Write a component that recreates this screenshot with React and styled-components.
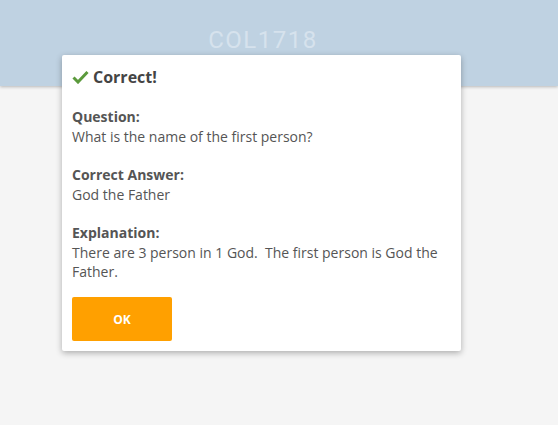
import React from 'react'
import styled, { createGlobalStyle } from 'styled-components'

const GlobalStyle = createGlobalStyle`
    html, body {
        margin: 0;
        padding: 0;
        background-color: #f5f5f5;
        height: 100%;
    }
    #root {
        min-height: 100%;
    }
`

const Page = styled.div`
    position: relative;
    height: 425px;
    background-color: #f5f5f5;
`

const Header = styled.header`
    height: 86px;
    background-color: #bfd2e2;
    box-shadow: 0 1px 3px rgba(0, 0, 0, 0.25);
    display: flex;
    justify-content: center;
    padding-right: 32px;
    box-sizing: border-box;
`

const HeaderTitle = styled.h1`
    margin: 0;
    padding-top: 26px;
    font-family: Roboto, "Liberation Sans", sans-serif;
    font-weight: 400;
    font-size: 24px;
    line-height: 28px;
    letter-spacing: 1.5px;
    color: #d6e2ed;
`

const Dialog = styled.div`
    position: absolute;
    top: 55px;
    left: 62px;
    width: 399px;
    box-sizing: border-box;
    padding: 11px 10px 10px;
    background-color: #fff;
    border-radius: 2px;
    box-shadow: 0 2px 6px rgba(0, 0, 0, 0.3);
    font-family: "Open Sans", "Liberation Sans", sans-serif;
    color: #555;
`

const DialogTitle = styled.h2`
    display: flex;
    align-items: center;
    gap: 4px;
    margin: 0 0 19px;
    font-size: 16px;
    line-height: 22px;
    font-weight: 700;
    color: #444;
`

const Section = styled.div`
    font-size: 14px;
    line-height: 19.5px;
    margin-bottom: ${props => props.last ? '15px' : '19px'};
`

const Label = styled.div`
    font-weight: 700;
`

const OkButton = styled.button`
    width: 100px;
    height: 44px;
    border: none;
    border-radius: 2px;
    background-color: #ffa000;
    color: #fff;
    font-family: "Open Sans", "Liberation Sans", sans-serif;
    font-weight: 700;
    font-size: 12px;
    padding-top: 2px;
    cursor: pointer;
    display: block;
`

const Check = () => (
    <svg width="17" height="14" viewBox="0 0 17 14">
        <path d="M1.5 7.5 L6 12 L15.5 2" fill="none" stroke="#5b9a3c" strokeWidth="3" strokeLinecap="butt" />
    </svg>
)

const App = () => (
    <Page>
        <GlobalStyle />
        <Header>
            <HeaderTitle>COL1718</HeaderTitle>
        </Header>
        <Dialog>
            <DialogTitle><Check /> Correct!</DialogTitle>
            <Section>
                <Label>Question:</Label>
                What is the name of the first person?
            </Section>
            <Section>
                <Label>Correct Answer:</Label>
                God the Father
            </Section>
            <Section last>
                <Label>Explanation:</Label>
                There are 3 person in 1 God.&nbsp; The first person is God the Father.
            </Section>
            <OkButton>OK</OkButton>
        </Dialog>
    </Page>
)

export default App
